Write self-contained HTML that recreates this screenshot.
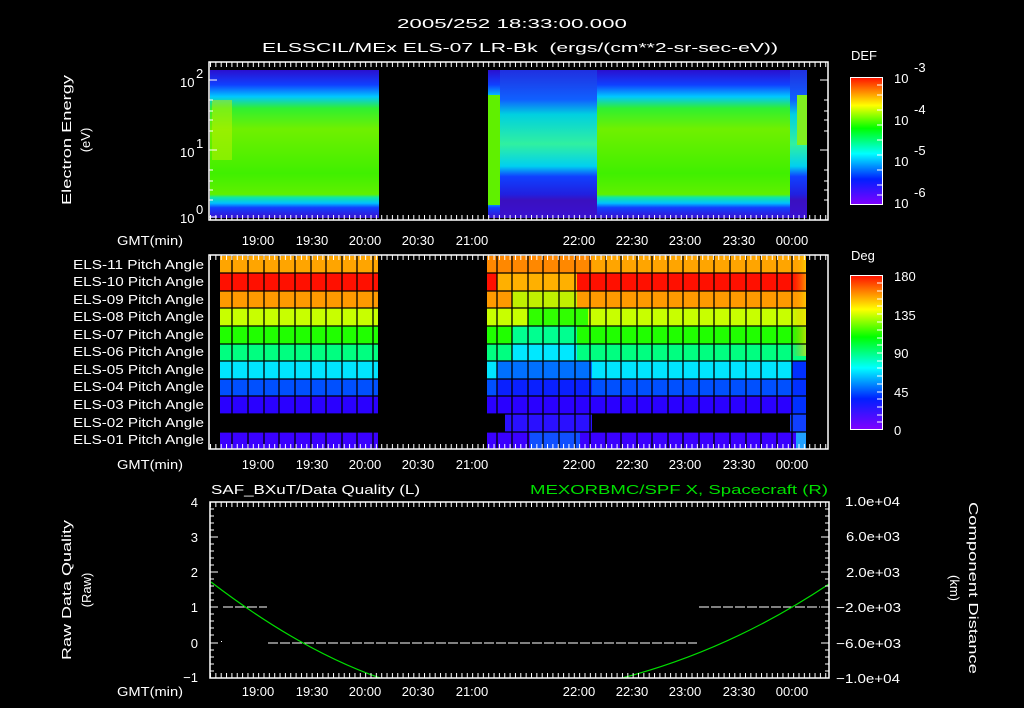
<!DOCTYPE html>
<html><head><meta charset="utf-8"><style>
html,body{margin:0;padding:0;background:#000;width:1024px;height:708px;overflow:hidden}
svg{display:block}
text{font-family:"Liberation Sans",sans-serif;fill:#fff;font-size:13px}
</style></head><body>
<svg width="1024" height="708" viewBox="0 0 1024 708" xmlns="http://www.w3.org/2000/svg">
<defs>
<linearGradient id="spec" x1="0" y1="70" x2="0" y2="218" gradientUnits="userSpaceOnUse">
<stop offset="0" stop-color="#2a10d0"/><stop offset="0.1" stop-color="#1040ff"/>
<stop offset="0.18" stop-color="#00c8ff"/><stop offset="0.26" stop-color="#30f030"/>
<stop offset="0.4" stop-color="#70f000"/><stop offset="0.7" stop-color="#40f000"/>
<stop offset="0.84" stop-color="#60f000"/><stop offset="0.86" stop-color="#10e8a0"/>
<stop offset="0.9" stop-color="#00c0ff"/><stop offset="0.93" stop-color="#1040ff"/>
<stop offset="1" stop-color="#3a10d0"/></linearGradient>
<linearGradient id="spec2" x1="0" y1="70" x2="0" y2="218" gradientUnits="userSpaceOnUse">
<stop offset="0" stop-color="#2030e0"/><stop offset="0.2" stop-color="#1060ff"/>
<stop offset="0.3" stop-color="#00d0e0"/><stop offset="0.5" stop-color="#30f0a0"/>
<stop offset="0.65" stop-color="#00d0f0"/><stop offset="0.72" stop-color="#1040ff"/>
<stop offset="0.84" stop-color="#2020e0"/><stop offset="0.88" stop-color="#3a10c0"/>
<stop offset="1" stop-color="#3a10d0"/></linearGradient>
<linearGradient id="cb" x1="0" y1="0" x2="0" y2="1">
<stop offset="0" stop-color="#ff1000"/><stop offset="0.22" stop-color="#ffff00"/>
<stop offset="0.4" stop-color="#00ff00"/><stop offset="0.6" stop-color="#00ffff"/>
<stop offset="0.8" stop-color="#0020ff"/><stop offset="1" stop-color="#8000ff"/></linearGradient>
<linearGradient id="lastcol" x1="0" y1="0" x2="1" y2="0">
<stop offset="0" stop-color="#ff8000" stop-opacity="0"/><stop offset="1" stop-color="#ffe000" stop-opacity="0.6"/></linearGradient>
<pattern id="tkd" x="210" y="0" width="5.35" height="708" patternUnits="userSpaceOnUse"><rect x="0" y="0" width="1" height="708" fill="#fff"/></pattern>
</defs>

<text x="512" y="28" text-anchor="middle" font-size="16" textLength="230" lengthAdjust="spacingAndGlyphs">2005/252 18:33:00.000</text>
<text x="262" y="52" font-size="16" textLength="516" lengthAdjust="spacingAndGlyphs" xml:space="preserve">ELSSCIL/MEx ELS-07 LR-Bk  (ergs/(cm**2-sr-sec-eV))</text>

<!-- Panel 1 -->
<rect x="210" y="70" width="169" height="148" fill="url(#spec)"/>
<rect x="212" y="100" width="20" height="60" fill="#c0f000" opacity="0.5"/>
<rect x="488" y="70" width="319" height="148" fill="url(#spec)"/>
<rect x="500" y="70" width="97" height="148" fill="url(#spec2)"/>
<rect x="488" y="95" width="12" height="110" fill="#60f000"/>
<rect x="790" y="70" width="17" height="148" fill="url(#spec2)"/>
<rect x="797" y="95" width="10" height="50" fill="#80f020"/>
<rect x="209" y="62" width="619" height="158" fill="none" stroke="#fff" stroke-width="1.5"/>
<rect x="210" y="62" width="618" height="5" fill="url(#tkd)"/>
<rect x="210" y="215" width="618" height="5" fill="url(#tkd)"/>
<g stroke="#fff" stroke-width="1">
<path d="M209 80h8M209 150h8M209 217h8M209 100h4M209 111h4M209 120h4M209 131h4M209 170h4M209 181h4M209 190h4M209 200h4"/>
<path d="M828 80h-8M828 150h-8M828 100h-4M828 111h-4M828 120h-4M828 131h-4M828 170h-4M828 181h-4M828 190h-4M828 200h-4"/>
</g>
<text x="180" y="87" font-size="14">10</text><text x="196" y="78" font-size="10">2</text>
<text x="180" y="157" font-size="14">10</text><text x="196" y="148" font-size="10">1</text>
<text x="180" y="223" font-size="14">10</text><text x="196" y="214" font-size="10">0</text>
<text transform="translate(71,140) rotate(-90)" text-anchor="middle" font-size="15" textLength="130" lengthAdjust="spacingAndGlyphs">Electron Energy</text>
<text transform="translate(90,140) rotate(-90)" text-anchor="middle" font-size="17">(eV)</text>

<g font-size="14" text-anchor="middle">
<text x="150" y="245" textLength="66" lengthAdjust="spacingAndGlyphs">GMT(min)</text>
<text x="258" y="245">19:00</text><text x="312" y="245">19:30</text><text x="365" y="245">20:00</text><text x="418" y="245">20:30</text><text x="472" y="245">21:00</text>
<text x="579" y="245">22:00</text><text x="632" y="245">22:30</text><text x="685" y="245">23:00</text><text x="739" y="245">23:30</text><text x="792" y="245">00:00</text>
</g>

<!-- colorbar DEF -->
<text x="851" y="60" font-size="16">DEF</text>
<rect x="850.5" y="77.5" width="32" height="127" fill="url(#cb)" stroke="#fff"/>
<g stroke="#fff"><path d="M882 85h-5M882 95h-5M882 110h-5M882 125h-5M882 140h-5M882 155h-5M882 170h-5M882 185h-5M882 195h-5"/></g>
<text x="894" y="83" font-size="16">10</text><text x="914" y="72" font-size="11">-3</text>
<text x="894" y="125" font-size="16">10</text><text x="914" y="114" font-size="11">-4</text>
<text x="894" y="166" font-size="16">10</text><text x="914" y="155" font-size="11">-5</text>
<text x="894" y="208" font-size="16">10</text><text x="914" y="197" font-size="11">-6</text>

<!-- Panel 2 -->
<g>
<rect x="220" y="256" width="158" height="17" fill="#ffa500"/>
<rect x="220" y="273" width="158" height="18" fill="#ff1000"/>
<rect x="220" y="291" width="158" height="17" fill="#ff9a00"/>
<rect x="220" y="308" width="158" height="18" fill="#c8ff00"/>
<rect x="220" y="326" width="158" height="18" fill="#20ff00"/>
<rect x="220" y="344" width="158" height="17" fill="#00ff80"/>
<rect x="220" y="361" width="158" height="18" fill="#00e5ff"/>
<rect x="220" y="379" width="158" height="17" fill="#0050ff"/>
<rect x="220" y="396" width="158" height="18" fill="#2a00ff"/>
<rect x="220" y="432" width="158" height="17" fill="#3a00ff"/>

<rect x="487" y="256" width="319" height="17" fill="#ffa500"/>
<rect x="487" y="256" width="105" height="17" fill="#ff8800"/>
<rect x="487" y="273" width="319" height="18" fill="#ff1000"/>
<rect x="497" y="273" width="80" height="18" fill="#ffb000"/>
<rect x="487" y="291" width="319" height="17" fill="#ff9a00"/>
<rect x="512" y="291" width="65" height="17" fill="#c0f000"/>
<rect x="487" y="308" width="319" height="18" fill="#c8ff00"/>
<rect x="528" y="308" width="60" height="18" fill="#30ff00"/>
<rect x="487" y="326" width="319" height="18" fill="#20ff00"/>
<rect x="512" y="326" width="65" height="18" fill="#00ff90"/>
<rect x="487" y="344" width="319" height="17" fill="#00ff80"/>
<rect x="512" y="344" width="65" height="17" fill="#00e8ff"/>
<rect x="487" y="361" width="319" height="18" fill="#00e5ff"/>
<rect x="497" y="361" width="95" height="18" fill="#0070ff"/>
<rect x="487" y="379" width="319" height="17" fill="#0050ff"/>
<rect x="497" y="379" width="95" height="17" fill="#0a20ff"/>
<rect x="487" y="396" width="319" height="18" fill="#2a00ff"/>
<rect x="505" y="414" width="87" height="18" fill="#2a10ff"/>
<rect x="790" y="414" width="16" height="18" fill="#1040ff"/>
<rect x="487" y="432" width="319" height="17" fill="#3a00ff"/>
<rect x="530" y="432" width="50" height="17" fill="#1050ff"/>
<rect x="792" y="256" width="14" height="100" fill="url(#lastcol)"/>
<rect x="792" y="361" width="14" height="53" fill="#0030ff"/>
<rect x="796" y="432" width="10" height="17" fill="#20a0ff"/>
</g>
<g stroke="#000" stroke-width="1.3">
<path d="M220 273H378M220 291H378M220 308H378M220 326H378M220 344H378M220 361H378M220 379H378M220 396H378M220 414H378M220 432H378"/>
<path d="M487 273H806M487 291H806M487 308H806M487 326H806M487 344H806M487 361H806M487 379H806M487 396H806M487 414H806M487 432H806"/>
<path d="M232 256V449M248 256V449M264 256V449M279 256V449M295 256V449M311 256V449M326 256V449M342 256V449M357 256V449M373 256V449"/>
<path d="M497 256V449M512 256V449M528 256V449M543 256V449M559 256V449M575 256V449M590 256V449M606 256V449M621 256V449M637 256V449M652 256V449M668 256V449M683 256V449M699 256V449M714 256V449M730 256V449M746 256V449M761 256V449M777 256V449M792 256V449"/>
</g>
<rect x="209" y="255" width="619" height="194" fill="none" stroke="#fff" stroke-width="1.5"/>
<rect x="210" y="255" width="618" height="5" fill="url(#tkd)"/>
<rect x="210" y="444" width="618" height="5" fill="url(#tkd)"/>
<g font-size="13">
<text x="73" y="269" textLength="131" lengthAdjust="spacingAndGlyphs">ELS-11 Pitch Angle</text><text x="73" y="286" textLength="131" lengthAdjust="spacingAndGlyphs">ELS-10 Pitch Angle</text>
<text x="73" y="304" textLength="131" lengthAdjust="spacingAndGlyphs">ELS-09 Pitch Angle</text><text x="73" y="321" textLength="131" lengthAdjust="spacingAndGlyphs">ELS-08 Pitch Angle</text>
<text x="73" y="339" textLength="131" lengthAdjust="spacingAndGlyphs">ELS-07 Pitch Angle</text><text x="73" y="356" textLength="131" lengthAdjust="spacingAndGlyphs">ELS-06 Pitch Angle</text>
<text x="73" y="374" textLength="131" lengthAdjust="spacingAndGlyphs">ELS-05 Pitch Angle</text><text x="73" y="391" textLength="131" lengthAdjust="spacingAndGlyphs">ELS-04 Pitch Angle</text>
<text x="73" y="409" textLength="131" lengthAdjust="spacingAndGlyphs">ELS-03 Pitch Angle</text><text x="73" y="427" textLength="131" lengthAdjust="spacingAndGlyphs">ELS-02 Pitch Angle</text>
<text x="73" y="444" textLength="131" lengthAdjust="spacingAndGlyphs">ELS-01 Pitch Angle</text>
</g>
<g font-size="14" text-anchor="middle">
<text x="150" y="469" textLength="66" lengthAdjust="spacingAndGlyphs">GMT(min)</text>
<text x="258" y="469">19:00</text><text x="312" y="469">19:30</text><text x="365" y="469">20:00</text><text x="418" y="469">20:30</text><text x="472" y="469">21:00</text>
<text x="579" y="469">22:00</text><text x="632" y="469">22:30</text><text x="685" y="469">23:00</text><text x="739" y="469">23:30</text><text x="792" y="469">00:00</text>
</g>
<text x="851" y="260" font-size="16">Deg</text>
<rect x="850.5" y="275.5" width="32" height="154" fill="url(#cb)" stroke="#fff"/>
<g stroke="#fff"><path d="M882 283h-5M882 291h-5M882 299h-5M882 306h-5M882 314h-5M882 322h-5M882 330h-5M882 338h-5M882 345h-5M882 353h-5M882 361h-5M882 368h-5M882 376h-5M882 384h-5M882 392h-5M882 399h-5M882 407h-5M882 415h-5M882 422h-5"/></g>
<g font-size="17"><text x="894" y="281">180</text><text x="894" y="320">135</text><text x="894" y="358">90</text><text x="894" y="397">45</text><text x="894" y="435">0</text></g>

<!-- Panel 3 -->
<text x="211" y="494" font-size="16" textLength="209" lengthAdjust="spacingAndGlyphs">SAF_BXuT/Data Quality (L)</text>
<text x="530" y="494" font-size="16" style="fill:#00e000" textLength="298" lengthAdjust="spacingAndGlyphs">MEXORBMC/SPF X, Spacecraft (R)</text>
<path d="M223 607h44M699 607h121" stroke="#fff" stroke-width="1" stroke-dasharray="10 2"/>
<path d="M268 643h429" stroke="#fff" stroke-width="1" stroke-dasharray="10 2"/>
<rect x="221" y="641" width="1" height="1" fill="#fff"/>
<path d="M211 582 Q300 650 380 678 M622 678 Q730 650 829 584" fill="none" stroke="#00dd00" stroke-width="1.2"/>
<rect x="210" y="502" width="619" height="176" fill="none" stroke="#fff" stroke-width="1.5"/>
<rect x="210" y="502" width="618" height="5" fill="url(#tkd)"/>
<rect x="210" y="673" width="618" height="5" fill="url(#tkd)"/>
<g stroke="#fff" stroke-width="1">
<path d="M210 537h8M210 572h8M210 607h8M210 643h8M829 537h-8M829 572h-8M829 607h-8M829 643h-8"/>
<path d="M210 509h4M210 516h4M210 523h4M210 530h4M210 544h4M210 551h4M210 558h4M210 565h4M210 579h4M210 586h4M210 593h4M210 600h4M210 614h4M210 621h4M210 628h4M210 635h4M210 650h4M210 657h4M210 664h4M210 671h4"/>
<path d="M829 509h-4M829 516h-4M829 523h-4M829 530h-4M829 544h-4M829 551h-4M829 558h-4M829 565h-4M829 579h-4M829 586h-4M829 593h-4M829 600h-4M829 614h-4M829 621h-4M829 628h-4M829 635h-4M829 650h-4M829 657h-4M829 664h-4M829 671h-4"/>
</g>
<g font-size="14" text-anchor="end">
<text x="198" y="507">4</text><text x="198" y="542">3</text><text x="198" y="577">2</text><text x="198" y="612">1</text><text x="198" y="648">0</text><text x="198" y="682">−1</text>
</g>
<g font-size="14">
<text x="845" y="506" textLength="55" lengthAdjust="spacingAndGlyphs">1.0e+04</text><text x="846" y="541" textLength="54" lengthAdjust="spacingAndGlyphs">6.0e+03</text><text x="846" y="577" textLength="54" lengthAdjust="spacingAndGlyphs">2.0e+03</text>
<text x="836" y="612" textLength="65" lengthAdjust="spacingAndGlyphs">−2.0e+03</text><text x="836" y="648" textLength="65" lengthAdjust="spacingAndGlyphs">−6.0e+03</text><text x="836" y="683" textLength="64" lengthAdjust="spacingAndGlyphs">−1.0e+04</text>
</g>
<text transform="translate(71,590) rotate(-90)" text-anchor="middle" font-size="15" textLength="140" lengthAdjust="spacingAndGlyphs">Raw Data Quality</text>
<text transform="translate(91,590) rotate(-90)" text-anchor="middle" font-size="17">(Raw)</text>
<text transform="translate(969,588) rotate(90)" text-anchor="middle" font-size="15" textLength="172" lengthAdjust="spacingAndGlyphs">Component Distance</text>
<text transform="translate(950,588) rotate(90)" text-anchor="middle" font-size="17">(km)</text>
<g font-size="14" text-anchor="middle">
<text x="150" y="696" textLength="66" lengthAdjust="spacingAndGlyphs">GMT(min)</text>
<text x="258" y="696">19:00</text><text x="312" y="696">19:30</text><text x="365" y="696">20:00</text><text x="418" y="696">20:30</text><text x="472" y="696">21:00</text>
<text x="579" y="696">22:00</text><text x="632" y="696">22:30</text><text x="685" y="696">23:00</text><text x="739" y="696">23:30</text><text x="792" y="696">00:00</text>
</g>
</svg>
</body></html>
